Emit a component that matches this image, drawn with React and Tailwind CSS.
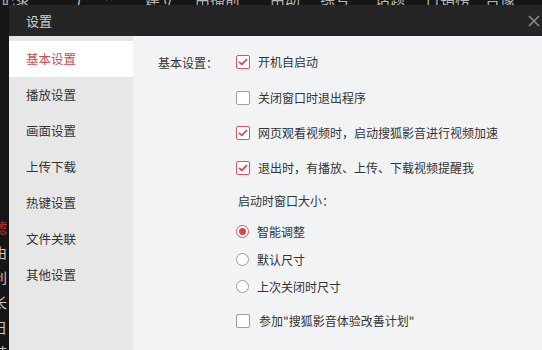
import React from "react";

const font = { fontFamily: '"Microsoft YaHei", "Noto Sans CJK SC", "Noto Sans", sans-serif' };

function Check({ checked }) {
  return checked ? (
    <span className="flex h-[14px] w-[14px] shrink-0 items-center justify-center rounded-[2px] border border-[#d4575d] bg-white">
      <svg width="10" height="8" viewBox="0 0 10 8">
        <path d="M1 3.8 L3.8 6.4 L9 1.2" fill="none" stroke="#d0474e" strokeWidth="1.7" />
      </svg>
    </span>
  ) : (
    <span className="h-[14px] w-[14px] shrink-0 rounded-[2px] border border-[#9d9d9d] bg-white" />
  );
}

function Radio({ checked }) {
  return (
    <span
      className={
        "flex h-[13px] w-[13px] shrink-0 items-center justify-center rounded-full border bg-white " +
        (checked ? "border-[#d4575d]" : "border-[#9d9d9d]")
      }
    >
      {checked && <span className="h-[7px] w-[7px] rounded-full bg-[#d0474e]" />}
    </span>
  );
}

function Row({ children, h }) {
  return <div className={"flex items-center gap-[8px] " + h}>{children}</div>;
}

export default function App() {
  const side = ["基本设置", "播放设置", "画面设置", "上传下载", "热键设置", "文件关联", "其他设置"];
  return (
    <div className="flex h-[350px] w-[542px] flex-col overflow-hidden bg-[#161616]" style={font}>
      <div className="h-[5px] shrink-0 overflow-hidden">
        <div className="-mt-[11px] flex whitespace-nowrap text-[15px] leading-[20px] text-[#b8b8b8]">
          <span className="w-[75px]">记录</span>
          <span className="w-[30px]">7</span>
          <span className="w-[40px]">^</span>
          <span className="w-[50px]">建立</span>
          <span className="w-[75px]">由播前</span>
          <span className="w-[50px]">由动</span>
          <span className="w-[55px]">综号</span>
          <span className="w-[50px]">话题</span>
          <span className="w-[60px]">日销榜</span>
          <span>吉像</span>
        </div>
      </div>
      <div className="flex flex-1">
        <div className="w-[9px] shrink-0 overflow-hidden pt-[210px]">
          <div className="-ml-[7px] flex flex-col text-[14px] leading-[25px] text-[#c8c8c8]">
            <span className="text-[#c0392b]">滤</span>
            <span>由</span>
            <span>利</span>
            <span>长</span>
            <span>日</span>
            <span>韩</span>
          </div>
        </div>
        <div className="flex flex-1 flex-col">
          <div className="flex h-[31px] shrink-0 items-center justify-between bg-[#252525] pl-[17px] pr-[2px]">
            <span className="text-[13px] text-[#d2d2d2]">设置</span>
            <svg width="12" height="12" viewBox="0 0 12 12">
              <path d="M1 1 L11 11 M11 1 L1 11" stroke="#8c8c8c" strokeWidth="1.6" />
            </svg>
          </div>
          <div className="flex flex-1">
            <div className="w-[124px] shrink-0 bg-[#e7e7e8] pt-[5px]">
              {side.map((s, i) => (
                <div
                  key={s}
                  className={
                    "flex h-[36px] items-center pl-[17px] text-[12.5px] " +
                    (i === 0 ? "bg-white text-[#cc4a50]" : "text-[#333333]")
                  }
                >
                  {s}
                </div>
              ))}
            </div>
            <div className="flex flex-1 bg-[#f2f3f4] pl-[25px] pt-[8px] text-[12px] text-[#333333]">
              <div className="w-[78px] pt-[9px] leading-[20px]">基本设置：</div>
              <div className="flex flex-col">
                <Row h="h-[36px]"><Check checked /><span>开机自启动</span></Row>
                <Row h="h-[35px]"><Check /><span>关闭窗口时退出程序</span></Row>
                <Row h="h-[35px]"><Check checked /><span>网页观看视频时，启动搜狐影音进行视频加速</span></Row>
                <Row h="h-[35px]"><Check checked /><span>退出时，有播放、上传、下载视频提醒我</span></Row>
                <div className="flex h-[32px] items-center pl-[2px]">启动时窗口大小：</div>
                <Row h="h-[29px]"><Radio checked /><span>智能调整</span></Row>
                <Row h="h-[27px]"><Radio /><span>默认尺寸</span></Row>
                <Row h="h-[27px]"><Radio /><span>上次关闭时尺寸</span></Row>
                <Row h="h-[42px]"><Check /><span className="pl-[1px]">参加"搜狐影音体验改善计划"</span></Row>
              </div>
            </div>
          </div>
        </div>
      </div>
    </div>
  );
}
